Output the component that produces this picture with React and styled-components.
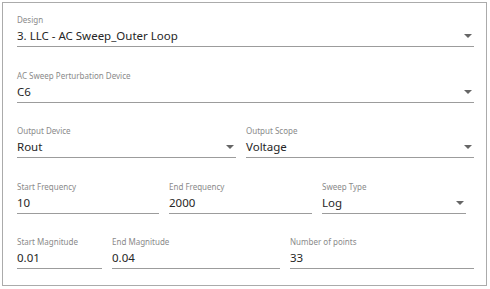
import React from 'react'
import styled, { createGlobalStyle } from 'styled-components'

const GlobalStyle = createGlobalStyle`
  body {
    margin: 0;
    background: #ffffff;
    font-family: "Noto Sans", "Open Sans", sans-serif;
  }
`

const Panel = styled.div`
  box-sizing: border-box;
  width: 485px;
  height: 284px;
  margin: 2px;
  border: 1px solid #ababab;
  padding: 11px 12px 0 14px;
  display: flex;
  flex-direction: column;
  gap: 22.5px;
`

const Row = styled.div`
  display: grid;
  grid-template-columns: ${p => p.cols};
  column-gap: ${p => p.gap || '10px'};
`

const Field = styled.div`
  display: flex;
  flex-direction: column;
  border-bottom: 1px solid #9c9c9c;
  height: 33px;
  box-sizing: border-box;
`

const Label = styled.div`
  font-size: 8px;
  line-height: 12px;
  color: #8a8a8a;
`

const Value = styled.div`
  display: flex;
  align-items: center;
  justify-content: space-between;
  font-size: 11.5px;
  line-height: 20px;
  color: #262626;
`

const Caret = styled.span`
  width: 0;
  height: 0;
  margin-right: 2px;
  border-left: 4px solid transparent;
  border-right: 4px solid transparent;
  border-top: 4px solid #666;
`

const Input = ({ label, value, select }) => (
  <Field>
    <Label>{label}</Label>
    <Value>
      <span>{value}</span>
      {select && <Caret />}
    </Value>
  </Field>
)

export default function App() {
  return (
    <>
      <GlobalStyle />
      <Panel>
        <Row cols="1fr">
          <Input label="Design" value="3. LLC - AC Sweep_Outer Loop" select />
        </Row>
        <Row cols="1fr">
          <Input label="AC Sweep Perturbation Device" value="C6" select />
        </Row>
        <Row cols="219px 228px" gap="10px">
          <Input label="Output Device" value="Rout" select />
          <Input label="Output Scope" value="Voltage" select />
        </Row>
        <Row cols="142px 143px 144px" gap="10px">
          <Input label="Start Frequency" value="10" />
          <Input label="End Frequency" value="2000" />
          <Input label="Sweep Type" value="Log" select />
        </Row>
        <Row cols="85px 168px 184px" gap="10px">
          <Input label="Start Magnitude" value="0.01" />
          <Input label="End Magnitude" value="0.04" />
          <Input label="Number of points" value="33" />
        </Row>
      </Panel>
    </>
  )
}
